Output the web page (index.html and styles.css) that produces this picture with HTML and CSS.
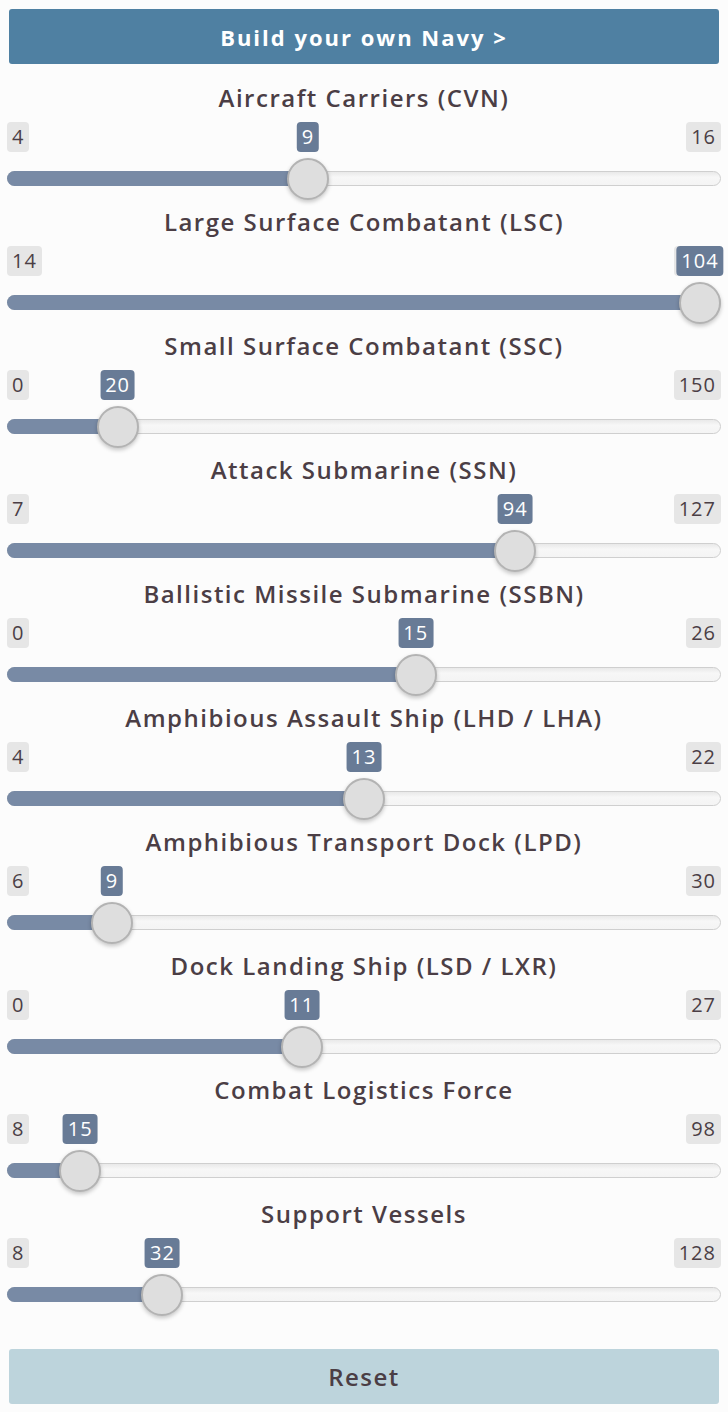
FILE: index.html
```html
<!DOCTYPE html>
<html lang="en">
<head>
<meta charset="utf-8">
<title>Build your own Navy</title>
<link rel="stylesheet" href="styles.css">
</head>
<body>
<div class="page">
  <button class="build">Build your own Navy &gt;</button>
  <div class="sliders">
    <div class="slider">
      <div class="title">Aircraft Carriers (CVN)</div>
      <div class="range">
        <div class="limits"><span class="lim">4</span><span class="lim">16</span></div>
        <div class="track"></div>
        <div class="fill" style="width: calc(21px + 0.41667 * (100% - 42px))"></div>
        <div class="rail">
          <span class="badge" style="left: 41.667%">9</span>
          <span class="handle" style="left: 41.667%"></span>
        </div>
      </div>
    </div>
    <div class="slider">
      <div class="title">Large Surface Combatant (LSC)</div>
      <div class="range">
        <div class="limits"><span class="lim">14</span><span class="lim">104</span></div>
        <div class="track"></div>
        <div class="fill" style="width: calc(21px + 1 * (100% - 42px))"></div>
        <div class="rail">
          <span class="badge" style="left: 100%">104</span>
          <span class="handle" style="left: 100%"></span>
        </div>
      </div>
    </div>
    <div class="slider">
      <div class="title">Small Surface Combatant (SSC)</div>
      <div class="range">
        <div class="limits"><span class="lim">0</span><span class="lim">150</span></div>
        <div class="track"></div>
        <div class="fill" style="width: calc(21px + 0.13333 * (100% - 42px))"></div>
        <div class="rail">
          <span class="badge" style="left: 13.333%">20</span>
          <span class="handle" style="left: 13.333%"></span>
        </div>
      </div>
    </div>
    <div class="slider">
      <div class="title">Attack Submarine (SSN)</div>
      <div class="range">
        <div class="limits"><span class="lim">7</span><span class="lim">127</span></div>
        <div class="track"></div>
        <div class="fill" style="width: calc(21px + 0.725 * (100% - 42px))"></div>
        <div class="rail">
          <span class="badge" style="left: 72.5%">94</span>
          <span class="handle" style="left: 72.5%"></span>
        </div>
      </div>
    </div>
    <div class="slider">
      <div class="title">Ballistic Missile Submarine (SSBN)</div>
      <div class="range">
        <div class="limits"><span class="lim">0</span><span class="lim">26</span></div>
        <div class="track"></div>
        <div class="fill" style="width: calc(21px + 0.57692 * (100% - 42px))"></div>
        <div class="rail">
          <span class="badge" style="left: 57.692%">15</span>
          <span class="handle" style="left: 57.692%"></span>
        </div>
      </div>
    </div>
    <div class="slider">
      <div class="title">Amphibious Assault Ship (LHD / LHA)</div>
      <div class="range">
        <div class="limits"><span class="lim">4</span><span class="lim">22</span></div>
        <div class="track"></div>
        <div class="fill" style="width: calc(21px + 0.5 * (100% - 42px))"></div>
        <div class="rail">
          <span class="badge" style="left: 50%">13</span>
          <span class="handle" style="left: 50%"></span>
        </div>
      </div>
    </div>
    <div class="slider">
      <div class="title">Amphibious Transport Dock (LPD)</div>
      <div class="range">
        <div class="limits"><span class="lim">6</span><span class="lim">30</span></div>
        <div class="track"></div>
        <div class="fill" style="width: calc(21px + 0.125 * (100% - 42px))"></div>
        <div class="rail">
          <span class="badge" style="left: 12.5%">9</span>
          <span class="handle" style="left: 12.5%"></span>
        </div>
      </div>
    </div>
    <div class="slider">
      <div class="title">Dock Landing Ship (LSD / LXR)</div>
      <div class="range">
        <div class="limits"><span class="lim">0</span><span class="lim">27</span></div>
        <div class="track"></div>
        <div class="fill" style="width: calc(21px + 0.40741 * (100% - 42px))"></div>
        <div class="rail">
          <span class="badge" style="left: 40.741%">11</span>
          <span class="handle" style="left: 40.741%"></span>
        </div>
      </div>
    </div>
    <div class="slider">
      <div class="title">Combat Logistics Force</div>
      <div class="range">
        <div class="limits"><span class="lim">8</span><span class="lim">98</span></div>
        <div class="track"></div>
        <div class="fill" style="width: calc(21px + 0.07778 * (100% - 42px))"></div>
        <div class="rail">
          <span class="badge" style="left: 7.778%">15</span>
          <span class="handle" style="left: 7.778%"></span>
        </div>
      </div>
    </div>
    <div class="slider">
      <div class="title">Support Vessels</div>
      <div class="range">
        <div class="limits"><span class="lim">8</span><span class="lim">128</span></div>
        <div class="track"></div>
        <div class="fill" style="width: calc(21px + 0.2 * (100% - 42px))"></div>
        <div class="rail">
          <span class="badge" style="left: 20%">32</span>
          <span class="handle" style="left: 20%"></span>
        </div>
      </div>
    </div>
  </div>
  <button class="reset">Reset</button>
</div>
</body>
</html>
```

FILE: styles.css
```css
html, body {
  margin: 0;
  padding: 0;
  background: #fcfcfc;
}

.page {
  padding: 9px 7px 0;
  font-family: "Open Sans", "Noto Sans", "Liberation Sans", sans-serif;
  color: #4b3e45;
}

.build,
.reset {
  display: block;
  width: calc(100% - 4px);
  margin: 0 2px;
  height: 55px;
  border: 0;
  border-radius: 3px;
  font-family: inherit;
  text-align: center;
  padding: 0;
}

.build {
  background: #4f80a2;
  color: #ffffff;
  font-size: 22px;
  font-weight: 700;
  letter-spacing: 2px;
}

.reset {
  margin-top: 26px;
  background: #bdd4dc;
  color: #4b3e45;
  font-size: 24px;
  font-weight: 600;
  letter-spacing: 1.5px;
}

.sliders {
  margin-top: 19px;
}

.slider {
  height: 124px;
}

.title {
  height: 30px;
  line-height: 30px;
  font-size: 24px;
  font-weight: 600;
  text-align: center;
  letter-spacing: 1.5px;
}

.range {
  position: relative;
  margin-top: 9px;
  height: 85px;
}

.limits {
  display: flex;
  justify-content: space-between;
}

.lim,
.badge {
  display: inline-block;
  height: 30px;
  line-height: 30px;
  padding: 0 5px;
  border-radius: 4px;
  font-size: 20px;
  letter-spacing: 1px;
}

.lim {
  background: #e6e6e6;
  color: #4b3e45;
}

.track {
  position: absolute;
  left: 0;
  right: 0;
  top: 49px;
  height: 15px;
  box-sizing: border-box;
  border: 1px solid #cfcfcf;
  border-radius: 8px;
  background: linear-gradient(#e9e9e9, #f7f7f7 40%, #f4f4f4);
}

.fill {
  position: absolute;
  left: 0;
  top: 49px;
  height: 15px;
  border-radius: 8px 0 0 8px;
  background: #788aa5;
}

.rail {
  position: absolute;
  left: 21px;
  right: 21px;
  top: 0;
  bottom: 0;
}

.badge {
  position: absolute;
  top: 0;
  transform: translateX(-50%);
  background: #687b96;
  color: #ffffff;
}

.handle {
  position: absolute;
  top: 36px;
  width: 42px;
  height: 42px;
  margin-left: -21px;
  box-sizing: border-box;
  border-radius: 50%;
  border: 2px solid #b3b3b3;
  background: #dedede;
  box-shadow: 0 2px 4px rgba(0, 0, 0, 0.22);
}
```
